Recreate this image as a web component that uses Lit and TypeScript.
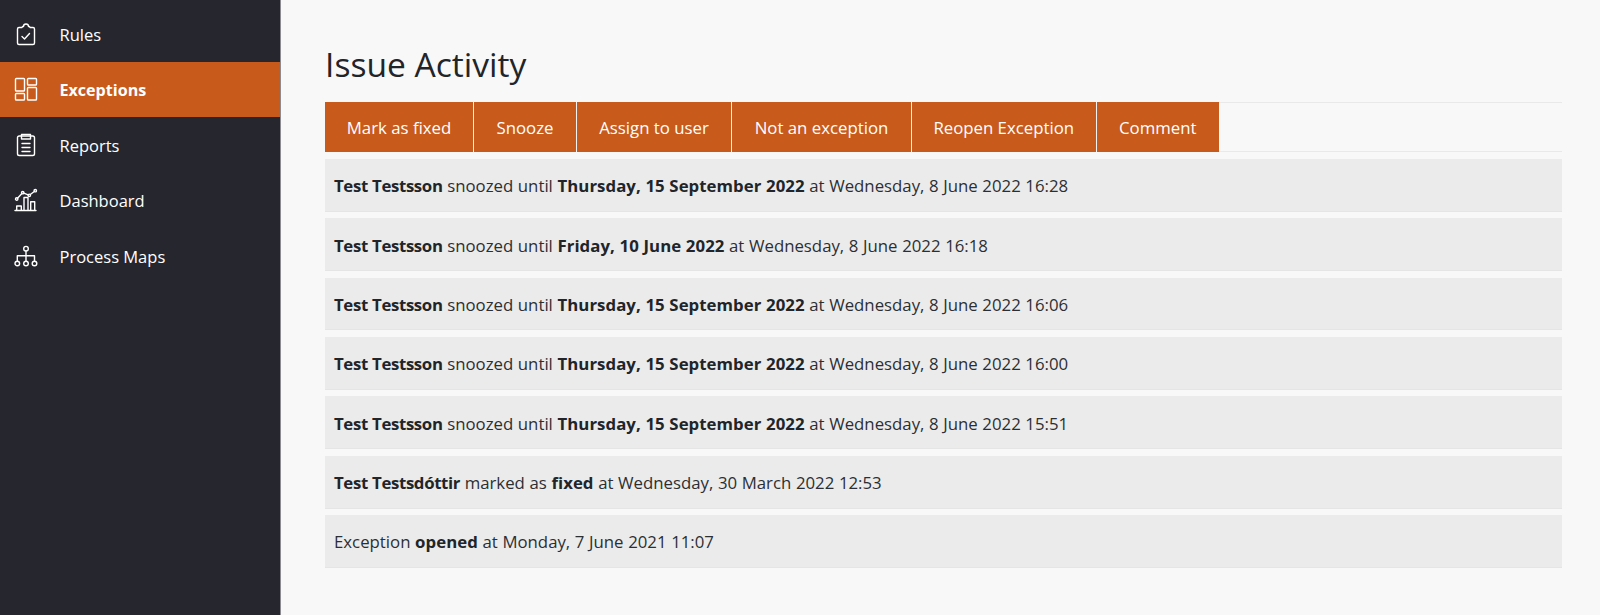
import { LitElement, html, css, svg } from "lit";
import { customElement } from "lit/decorators.js";

const icons: Record<string, unknown> = {
  rules: svg`<path d="M8 5.500H5A1.500 1.500 0 0 0 3.500 7V21A1.500 1.500 0 0 0 5 22.500H19A1.500 1.500 0 0 0 20.500 21V7A1.500 1.500 0 0 0 19 5.500H16L15.500 4.500H14.500A2.500 2.500 0 0 0 9.500 4.500H8.500Z"/><path d="M8 14.500L10.500 17L15.500 11.500"/>`,
  exceptions: svg`<rect x="1.500" y="1.500" width="9" height="12.500" rx=".8"/><rect x="13.500" y="1.500" width="9" height="6.500" rx=".8"/><rect x="1.500" y="16.500" width="9" height="6.500" rx=".8"/><rect x="13.500" y="10.500" width="9" height="12.500" rx=".8"/>`,
  reports: svg`<rect x="3.500" y="3" width="17" height="19.500" rx="1.800"/><path d="M7.500 1.500H16.500V6H7.500ZM8 10.500H16M8 14.500H16M8 18.500H16"/>`,
  dashboard: svg`<path d="M1 22.500H22M2.700 22.500V18H7.300V22.500M10 22.500V9.500H14V22.500M16.700 22.500V13.700H20.700V22.500M3.500 10.200L7.900 5.500M9.800 5.200L14.200 6.900M16.300 6.500L20.300 3.500"/><circle cx="2.700" cy="11" r="1.200"/><circle cx="8.700" cy="4.700" r="1.200"/><circle cx="15.300" cy="7.300" r="1.200"/><circle cx="21.300" cy="2.700" r="1.200"/>`,
  maps: svg`<circle cx="12" cy="4.700" r="2.300"/><circle cx="3.300" cy="19.500" r="2.300"/><circle cx="12" cy="19.500" r="2.300"/><circle cx="20.500" cy="19.500" r="2.300"/><path d="M12 7V17.200M3.300 17.200V11.700H20.500V17.200"/>`,
};
const nav = [
  ["rules", "Rules"],
  ["exceptions", "Exceptions"],
  ["reports", "Reports"],
  ["dashboard", "Dashboard"],
  ["maps", "Process Maps"],
];
const buttons: [string, number][] = [
  ["Mark as fixed", 149],
  ["Snooze", 103],
  ["Assign to user", 155],
  ["Not an exception", 180],
  ["Reopen Exception", 184.5],
  ["Comment", 122.5],
];
const snooze = (d: string, t: string) => html`<b class="name">Test Testsson</b> snoozed until <b>${d}</b> at Wednesday, 8 June 2022 ${t}`;
const rows = [
  snooze("Thursday, 15 September 2022", "16:28"),
  snooze("Friday, 10 June 2022", "16:18"),
  snooze("Thursday, 15 September 2022", "16:06"),
  snooze("Thursday, 15 September 2022", "16:00"),
  snooze("Thursday, 15 September 2022", "15:51"),
  html`<b class="name">Test Testsdóttir</b> marked as <b>fixed</b> at Wednesday, 30 March 2022 12:53`,
  html`Exception <b>opened</b> at Monday, 7 June 2021 11:07`,
];

@customElement("app-root")
export class AppRoot extends LitElement {
  static styles = css`
    :host { display: flex; height: 615px; overflow: hidden; background: #f8f8f8; color: #2b2f33; font-family: "Open Sans", "Noto Sans", sans-serif; font-size: 16.800px; }
    .side { flex: none; background: #26262e; padding-top: 6px; box-sizing: border-box; border-right: 1px solid #8c8c90; width: 281px; }
    .item { height: 55.500px; display: flex; align-items: center; color: #fff; font-size: 16.500px; padding: 1px 0 0 14px; box-sizing: border-box; }
    .item.on { background: #c85a1b; font-weight: 700; font-size: 16.100px; }
    .item svg { width: 24px; height: 24px; margin-top: -1px; fill: none; stroke: #fff; stroke-width: 1.400; stroke-linecap: round; stroke-linejoin: round; flex: none; }
    .item span { margin-left: 21.500px; }
    main { flex: 1; padding: 0 38px 0 44px; min-width: 0; }
    h1 { margin: 38px 0 0; font-size: 33.600px; font-weight: 400; line-height: 52px; height: 64px; color: #212529; }
    .bar { display: flex; height: 50px; box-sizing: border-box; border-top: 1px solid #e9e9e9; border-bottom: 1px solid #e9e9e9; margin-bottom: 7px; }
    .bar div { display: flex; align-items: center; justify-content: center; box-sizing: border-box; padding-top: 1px; margin: -1px 0 0; height: 50px; background: #c85a1b; color: #fff; border-right: 1px solid #f2f2f2; }
    .bar div:last-child { border-right: 0; }
    .row { height: 52.800px; box-sizing: border-box; background: #ebebeb; display: flex; align-items: center; padding: 2px 0 0 9px; margin-bottom: 6.550px; white-space: pre-wrap; word-spacing: 0.250px; border-bottom: 1px solid #e5e5e5; }
    b { font-weight: 700; color: #212529; letter-spacing: 0.050px; }
    .name { letter-spacing: -0.360px; }
  `;
  render() {
    return html`<nav class="side">${nav.map(([k, l]) => html`<div class="item ${k === "exceptions" ? "on" : ""}"><svg viewBox="0 0 24 24">${icons[k]}</svg><span>${l}</span></div>`)}</nav>
    <main><h1>Issue Activity</h1>
    <div class="bar">${buttons.map(([b, w]) => html`<div style="width:${w}px">${b}</div>`)}</div>
    ${rows.map((r) => html`<div class="row"><span>${r}</span></div>`)}
    </main>`;
  }
}
